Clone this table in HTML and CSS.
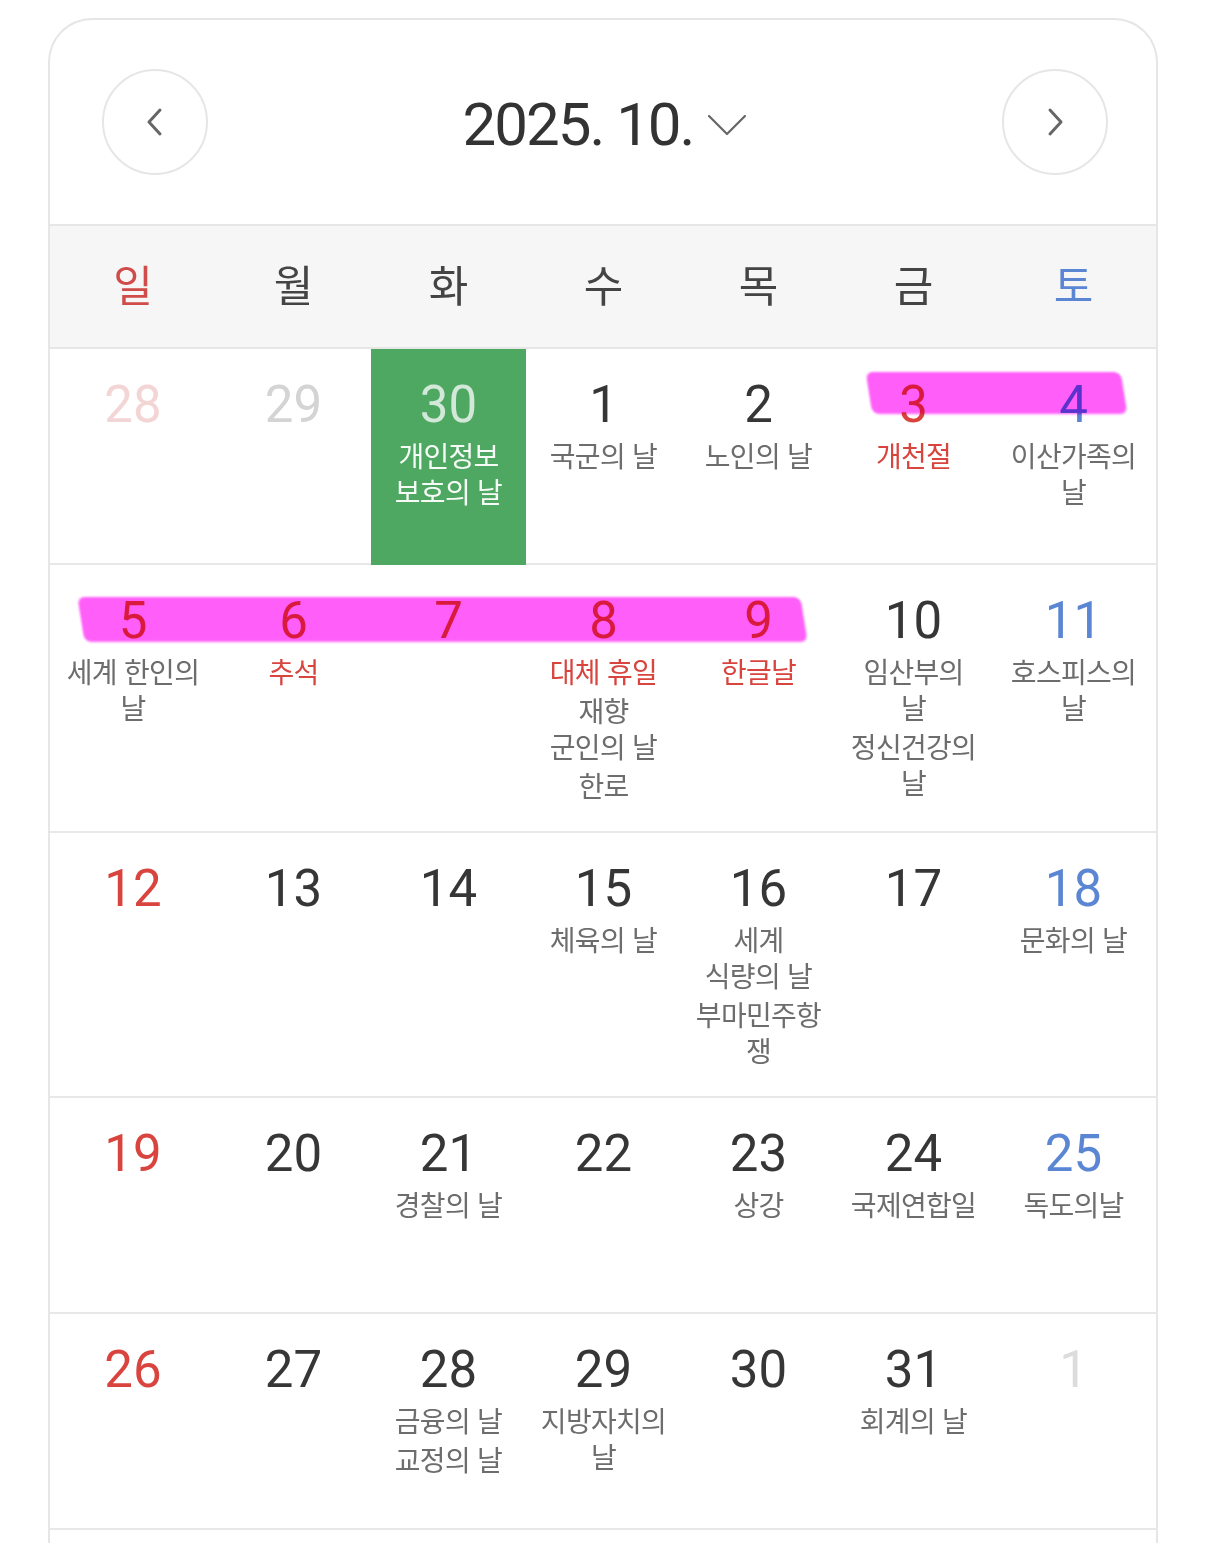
FILE: index.html
```html
<!DOCTYPE html>
<html lang="ko">
<head>
<meta charset="utf-8">
<title>2025. 10.</title>
<link rel="stylesheet" href="styles.css">
</head>
<body>
<div class="calendar">
  <header class="cal-head">
    <button class="nav-btn" aria-label="이전 달">
      <svg class="nav-icon" width="20" height="30" viewBox="0 0 20 30"><path d="M15 3 L4 15 L15 27" fill="none" stroke="#666" stroke-width="3" stroke-linecap="round" stroke-linejoin="round"/></svg>
    </button>
    <div class="title">
      <span class="title-text">2025. 10.</span>
      <svg class="caret" width="40" height="22" viewBox="0 0 40 22"><path d="M2 2 L20 20 L38 2" fill="none" stroke="#666" stroke-width="2.2" stroke-linecap="round" stroke-linejoin="round"/></svg>
    </div>
    <button class="nav-btn" aria-label="다음 달">
      <svg class="nav-icon" width="20" height="30" viewBox="0 0 20 30"><path d="M5 3 L16 15 L5 27" fill="none" stroke="#666" stroke-width="3" stroke-linecap="round" stroke-linejoin="round"/></svg>
    </button>
  </header>

  <div class="weekdays">
    <div class="wd sun">일</div>
    <div class="wd">월</div>
    <div class="wd">화</div>
    <div class="wd">수</div>
    <div class="wd">목</div>
    <div class="wd">금</div>
    <div class="wd sat">토</div>
  </div>

  <div class="week">
    <div class="cell"><div class="num prev-sun">28</div></div>
    <div class="cell"><div class="num prev">29</div></div>
    <div class="cell today"><div class="num">30</div><div class="label">개인정보 보호의 날</div></div>
    <div class="cell"><div class="num">1</div><div class="label">국군의 날</div></div>
    <div class="cell"><div class="num">2</div><div class="label">노인의 날</div></div>
    <div class="cell"><div class="num red">3</div><div class="label hol">개천절</div></div>
    <div class="cell"><div class="num blue">4</div><div class="label">이산가족의 날</div></div>
    <div class="mark mark-a"></div>
  </div>

  <div class="week">
    <div class="cell"><div class="num red">5</div><div class="label">세계 한인의 날</div></div>
    <div class="cell"><div class="num red">6</div><div class="label hol">추석</div></div>
    <div class="cell"><div class="num red">7</div></div>
    <div class="cell"><div class="num red">8</div><div class="label hol">대체 휴일</div><div class="label">재향 군인의 날</div><div class="label">한로</div></div>
    <div class="cell"><div class="num red">9</div><div class="label hol">한글날</div></div>
    <div class="cell"><div class="num">10</div><div class="label">임산부의 날</div><div class="label">정신건강의 날</div></div>
    <div class="cell"><div class="num blue">11</div><div class="label">호스피스의 날</div></div>
    <div class="mark mark-b"></div>
  </div>

  <div class="week">
    <div class="cell"><div class="num red">12</div></div>
    <div class="cell"><div class="num">13</div></div>
    <div class="cell"><div class="num">14</div></div>
    <div class="cell"><div class="num">15</div><div class="label">체육의 날</div></div>
    <div class="cell"><div class="num">16</div><div class="label">세계 식량의 날</div><div class="label">부마민주항쟁</div></div>
    <div class="cell"><div class="num">17</div></div>
    <div class="cell"><div class="num blue">18</div><div class="label">문화의 날</div></div>
  </div>

  <div class="week">
    <div class="cell"><div class="num red">19</div></div>
    <div class="cell"><div class="num">20</div></div>
    <div class="cell"><div class="num">21</div><div class="label">경찰의 날</div></div>
    <div class="cell"><div class="num">22</div></div>
    <div class="cell"><div class="num">23</div><div class="label">상강</div></div>
    <div class="cell"><div class="num">24</div><div class="label">국제연합일</div></div>
    <div class="cell"><div class="num blue">25</div><div class="label">독도의날</div></div>
  </div>

  <div class="week">
    <div class="cell"><div class="num red">26</div></div>
    <div class="cell"><div class="num">27</div></div>
    <div class="cell"><div class="num">28</div><div class="label">금융의 날</div><div class="label">교정의 날</div></div>
    <div class="cell"><div class="num">29</div><div class="label">지방자치의 날</div></div>
    <div class="cell"><div class="num">30</div></div>
    <div class="cell"><div class="num">31</div><div class="label">회계의 날</div></div>
    <div class="cell"><div class="num next">1</div></div>
  </div>

  <div class="cal-foot"></div>
</div>
</body>
</html>
```

FILE: styles.css
```css
* { box-sizing: border-box; }

body {
  margin: 0;
  background: #ffffff;
  font-family: "Noto Sans CJK KR", "Noto Sans", sans-serif;
}

.calendar {
  --cols: 166px repeat(5, 155px) 165px;
  margin: 18px 48px 0;
  border: 2px solid #e6e6e6;
  border-bottom: none;
  border-radius: 44px 44px 0 0;
  overflow: hidden;
  background: #ffffff;
}

.cal-head {
  display: flex;
  align-items: center;
  justify-content: space-between;
  padding: 49px 48px 49px 52px;
  border-bottom: 2px solid #e6e6e6;
}

.nav-btn {
  width: 106px;
  height: 106px;
  border-radius: 50%;
  border: 2px solid #e6e6e6;
  background: #ffffff;
  display: flex;
  align-items: center;
  justify-content: center;
  padding: 0;
}

.nav-icon { display: block; }

.title {
  display: flex;
  align-items: center;
  gap: 14px;
  padding-top: 5px;
}

.title-text {
  font-family: Roboto, "Noto Sans", sans-serif;
  font-size: 60px;
  line-height: 1;
  letter-spacing: -2px;
  color: #333333;
}

.caret { display: block; margin-top: 0; }

.weekdays {
  display: grid;
  grid-template-columns: var(--cols);
  align-items: center;
  height: 123px;
  padding-bottom: 7px;
  background: #f6f6f6;
  border-bottom: 2px solid #e6e6e6;
}

.wd {
  text-align: center;
  font-size: 43px;
  line-height: 1;
  color: #444444;
}

.wd.sun { color: #cf4c4a; }
.wd.sat { color: #5b86d3; }

.week {
  position: relative;
  display: grid;
  grid-template-columns: var(--cols);
  min-height: 216px;
  border-bottom: 2px solid #e8e8e8;
}

.cell {
  padding: 26px 14px 28px;
  text-align: center;
}

.num {
  font-family: Roboto, "Noto Sans", sans-serif;
  font-size: 51px;
  line-height: 60px;
  margin-bottom: 2px;
  color: #363636;
}

.num.red { color: #d9443e; }
.num.blue { color: #5b86d3; }
.num.prev-sun { color: #f3d5d5; }
.num.prev { color: #d4d4d4; }
.num.next { color: #dcdcdc; }

.label {
  font-size: 28px;
  line-height: 36px;
  letter-spacing: -0.7px;
  color: #6d6d6d;
  word-break: keep-all;
  overflow-wrap: anywhere;
}

.label + .label { margin-top: 3px; }

.label.hol { color: #d8453f; }

.cell.today { background: #4ea862; margin-bottom: -2px; }
.cell.today .num { color: #d3e8d8; }
.cell.today .label { color: #f6fbf7; }

.mark {
  position: absolute;
  background: #ff5ef8;
  mix-blend-mode: multiply;
  filter: blur(1.2px);
  transform: skewX(9deg);
  border-radius: 7px;
  pointer-events: none;
}

.mark-a { left: 819px; top: 23px; width: 255px; height: 42px; }
.mark-b { left: 31px; top: 32px; width: 723px; height: 45px; }

.cal-foot { height: 40px; }
```
